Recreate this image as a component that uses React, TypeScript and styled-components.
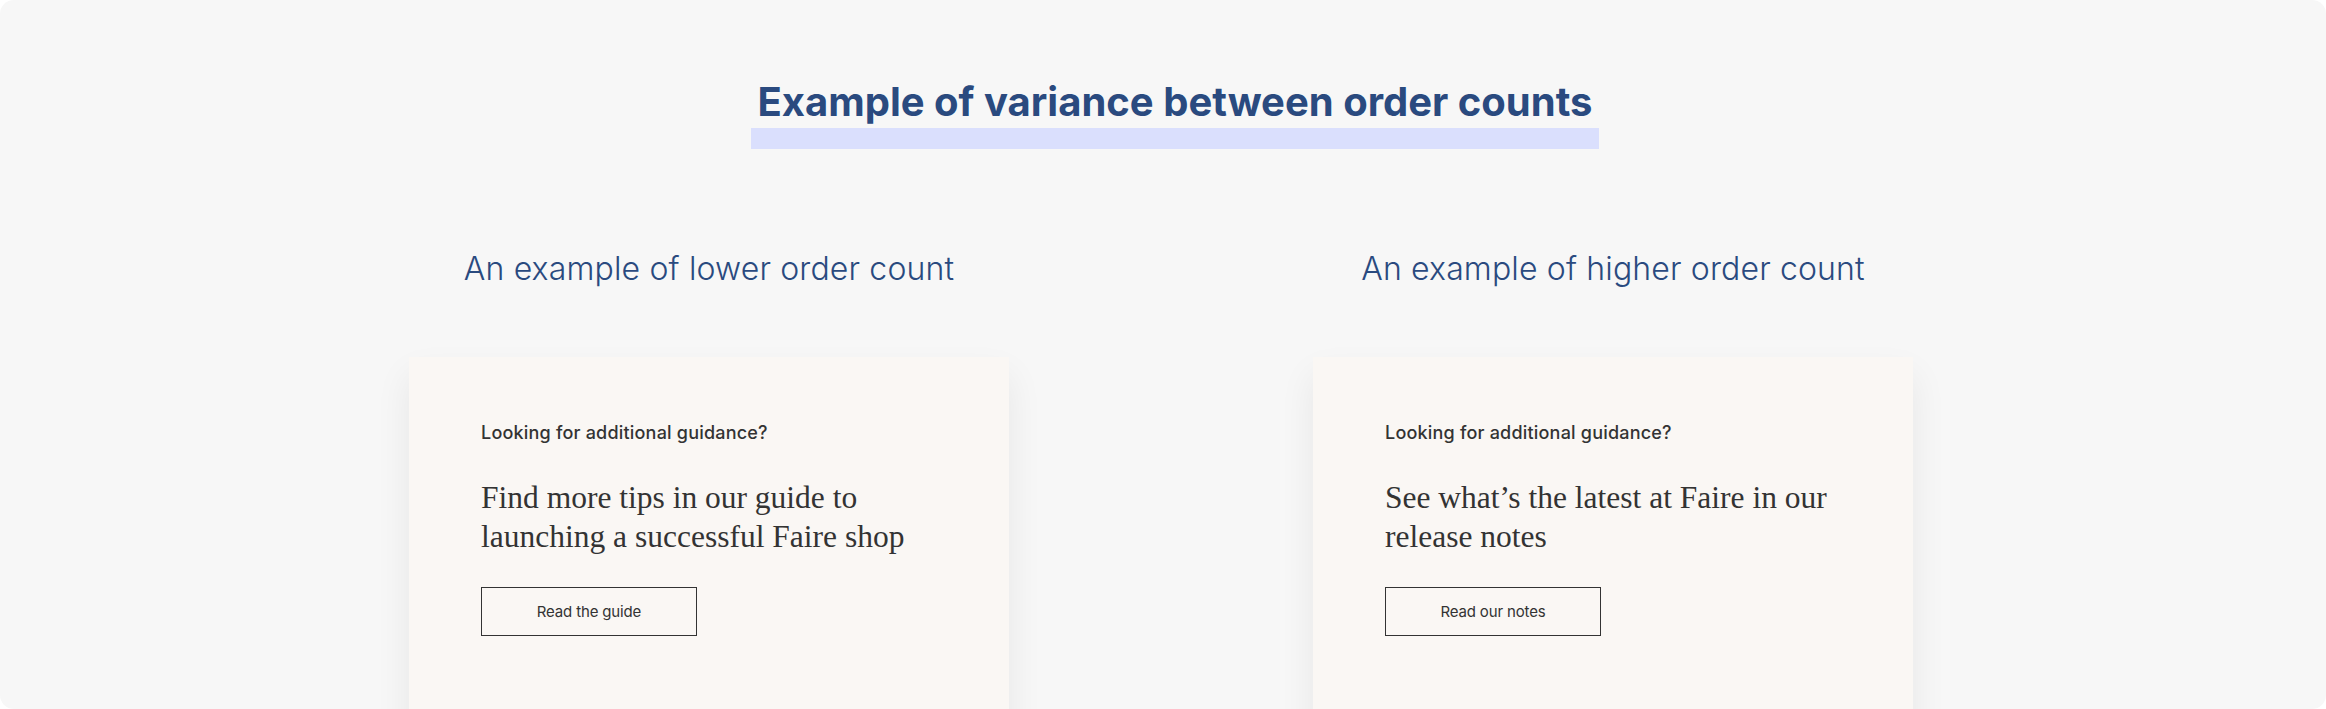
import styled, { createGlobalStyle } from "styled-components";

const GlobalStyle = createGlobalStyle`
    html, body {
        margin: 0;
        padding: 0;
        background: #ffffff;
    }
    * {
        box-sizing: border-box;
    }
`;

const Frame = styled.div`
    width: 2326px;
    height: 709px;
    background: #f7f7f7;
    border-radius: 14px;
    overflow: hidden;
    display: flex;
    flex-direction: column;
    align-items: center;
    padding-top: 78px;
    font-family: Inter, "Noto Sans", sans-serif;
`;

const TitleBlock = styled.div`
    display: inline-flex;
    flex-direction: column;
    align-items: stretch;
    margin-left: 24px;
`;

const Title = styled.h1`
    margin: 0;
    padding: 0 7px;
    font-size: 40px;
    line-height: 48px;
    font-weight: 700;
    letter-spacing: 0;
    color: #2a4a7f;
    text-align: center;
    white-space: nowrap;
`;

const Highlight = styled.div`
    height: 21px;
    margin-top: 2px;
    background: #dadffd;
`;

const Columns = styled.div`
    display: grid;
    grid-template-columns: 600px 600px;
    column-gap: 304px;
    padding-right: 4px;
    margin-top: 100px;
`;

const Column = styled.div`
    display: flex;
    flex-direction: column;
    align-items: stretch;
`;

const Subtitle = styled.h2`
    margin: 0;
    font-size: 32px;
    line-height: 40px;
    font-weight: 300;
    letter-spacing: 0.15px;
    color: #2a4a7f;
    text-align: center;
`;

const Card = styled.div`
    margin-top: 68px;
    height: 420px;
    background: #faf7f4;
    box-shadow: 0 18px 34px rgba(0, 0, 0, 0.07);
    padding: 64px 72px;
    display: flex;
    flex-direction: column;
    align-items: flex-start;
`;

const Eyebrow = styled.div`
    font-size: 18px;
    line-height: 24px;
    font-weight: 500;
    color: #333333;
    letter-spacing: 0.2px;
`;

const Headline = styled.div`
    margin-top: 33px;
    font-family: "Liberation Serif", "Times New Roman", serif;
    font-size: 31.5px;
    line-height: 39px;
    font-weight: 400;
    color: #333333;
    max-width: 456px;
`;

const OutlineButton = styled.button`
    margin-top: 31px;
    width: 216px;
    height: 49px;
    border: 1px solid #333333;
    background: transparent;
    font-family: Inter, "Noto Sans", sans-serif;
    font-size: 15px;
    font-weight: 400;
    letter-spacing: -0.15px;
    color: #333333;
    cursor: pointer;
`;

const examples = [
    {
        heading: "An example of lower order count",
        text: "Find more tips in our guide to launching a successful Faire shop",
        cta: "Read the guide",
    },
    {
        heading: "An example of higher order count",
        text: "See what\u2019s the latest at Faire in our release notes",
        cta: "Read our notes",
    },
];

export default function App() {
    return (
        <>
            <GlobalStyle />
            <Frame>
                <TitleBlock>
                    <Title>Example of variance between order counts</Title>
                    <Highlight />
                </TitleBlock>
                <Columns>
                    {examples.map((e) => (
                        <Column key={e.heading}>
                            <Subtitle>{e.heading}</Subtitle>
                            <Card>
                                <Eyebrow>Looking for additional guidance?</Eyebrow>
                                <Headline>{e.text}</Headline>
                                <OutlineButton>{e.cta}</OutlineButton>
                            </Card>
                        </Column>
                    ))}
                </Columns>
            </Frame>
        </>
    );
}
